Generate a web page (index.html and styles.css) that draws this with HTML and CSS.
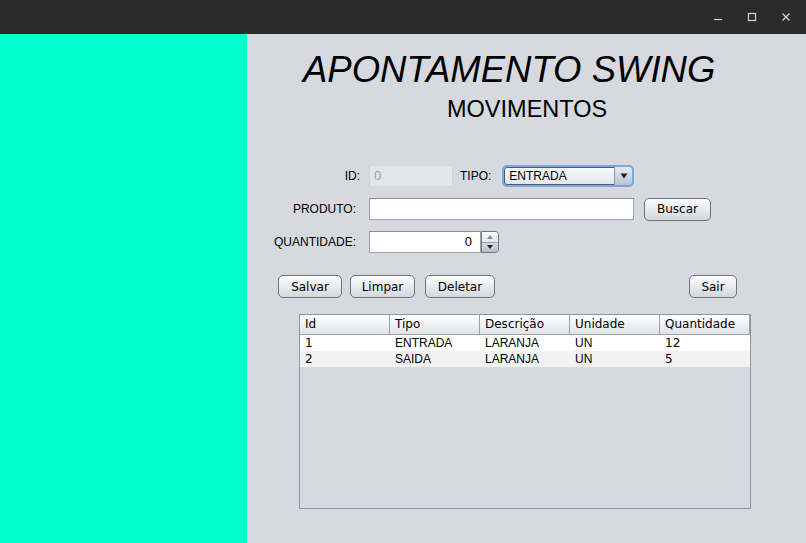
FILE: index.html
```html
<!DOCTYPE html>
<html>
<head>
<meta charset="utf-8">
<link rel="stylesheet" href="styles.css">
</head>
<body>
<div class="titlebar">
  <div class="winbtn">
    <svg width="10" height="10" viewBox="0 0 10 10"><path d="M1 7.5h8" stroke="#d4d4d4" stroke-width="1.2"/></svg>
  </div>
  <div class="winbtn">
    <svg width="10" height="10" viewBox="0 0 10 10"><rect x="1.5" y="1.5" width="7" height="7" fill="none" stroke="#d4d4d4" stroke-width="1.2"/></svg>
  </div>
  <div class="winbtn">
    <svg width="10" height="10" viewBox="0 0 10 10"><path d="M1.5 1.5l7 7M8.5 1.5l-7 7" stroke="#d4d4d4" stroke-width="1.3"/></svg>
  </div>
</div>
<div class="main">
  <div class="side"></div>
  <div class="panel">
    <h1 class="title">APONTAMENTO SWING</h1>
    <h2 class="subtitle">MOVIMENTOS</h2>
    <div class="form">
      <div class="row row-id">
        <label class="lbl lbl-id">ID:</label>
        <div class="field field-id">0</div>
        <label class="lbl lbl-tipo">TIPO:</label>
        <div class="combo">
          <span class="combo-text">ENTRADA</span>
          <span class="combo-arrow"><svg width="8" height="6" viewBox="0 0 8 6"><path d="M0.5 0.5h7L4 5.5z" fill="#222"/></svg></span>
        </div>
      </div>
      <div class="row">
        <label class="lbl">PRODUTO:</label>
        <div class="field field-prod"></div>
        <button class="btn btn-buscar">Buscar</button>
      </div>
      <div class="row">
        <label class="lbl">QUANTIDADE:</label>
        <div class="spinner">
          <div class="spin-field">0</div>
          <div class="spin-btns">
            <span class="spin-up"><svg width="6" height="4" viewBox="0 0 6 4"><path d="M0 4h6L3 0z" fill="#8a8f96"/></svg></span>
            <span class="spin-down"><svg width="6" height="4" viewBox="0 0 6 4"><path d="M0 0h6L3 4z" fill="#222"/></svg></span>
          </div>
        </div>
      </div>
    </div>
    <div class="actions">
      <button class="btn btn-salvar">Salvar</button>
      <button class="btn btn-limpar">Limpar</button>
      <button class="btn btn-deletar">Deletar</button>
      <button class="btn btn-sair">Sair</button>
    </div>
    <div class="table">
      <div class="thead">
        <div class="th">Id</div>
        <div class="th">Tipo</div>
        <div class="th">Descrição</div>
        <div class="th">Unidade</div>
        <div class="th">Quantidade</div>
      </div>
      <div class="tr odd">
        <div class="td num">1</div>
        <div class="td">ENTRADA</div>
        <div class="td">LARANJA</div>
        <div class="td">UN</div>
        <div class="td num">12</div>
      </div>
      <div class="tr even">
        <div class="td num">2</div>
        <div class="td">SAIDA</div>
        <div class="td">LARANJA</div>
        <div class="td">UN</div>
        <div class="td num">5</div>
      </div>
    </div>
  </div>
</div>
</body>
</html>
```

FILE: styles.css
```css
* { box-sizing: border-box; }
html, body { margin: 0; padding: 0; }
body {
  width: 806px;
  height: 543px;
  overflow: hidden;
  font-family: "Liberation Sans", Arial, sans-serif;
  font-size: 12px;
  color: #000;
  background: #d6d9df;
}
.titlebar {
  height: 34px;
  background: #2b2b2b;
  display: flex;
  justify-content: flex-end;
  align-items: center;
  padding-right: 3px;
}
.winbtn {
  width: 34px;
  height: 34px;
  display: flex;
  align-items: center;
  justify-content: center;
}
.main {
  display: flex;
  height: 509px;
}
.side {
  width: 247px;
  background: #00ffcc;
}
.panel {
  flex: 1;
  background: #d6d9df;
  padding-top: 16px;
}
.title {
  margin: 0 0 0 56px;
  font-family: "Liberation Sans", Arial, sans-serif;
  font-style: italic;
  font-weight: normal;
  font-size: 36.5px;
  line-height: 40px;
  white-space: nowrap;
}
.subtitle {
  margin: 5px 0 0 200px;
  font-family: "Liberation Sans", Arial, sans-serif;
  font-weight: normal;
  font-size: 23.5px;
  line-height: 28px;
}
.form {
  margin-top: 42px;
  padding-left: 19px;
  display: flex;
  flex-direction: column;
  gap: 11px;
}
.row {
  display: flex;
  align-items: center;
  height: 22px;
}
.lbl {
  width: 90px;
  text-align: right;
  font-size: 12px;
}
.lbl-id { width: 94px; margin-right: 9px; }
.row .lbl:not(.lbl-id):not(.lbl-tipo) { margin-right: 13px; }
.lbl-tipo { width: auto; margin-left: 7px; margin-right: 11px; }
.field {
  height: 22px;
  background: #fff;
  border: 1px solid #9ea3aa;
  border-top-color: #8a8f96;
  padding: 0 4px;
  line-height: 20px;
  font-size: 13px;
}
.field-id {
  width: 84px;
  background: #e3e5e9;
  border-color: #d0d3d8;
  color: #9a9da3;
}
.field-prod { width: 265px; }
.combo {
  width: 132px;
  height: 22px;
  border: 2px solid #7ca6d9;
  border-radius: 5px;
  background: linear-gradient(#fbfcfd, #dfe4ec);
  display: flex;
  align-items: center;
  box-shadow: inset 0 0 0 1px #4d5d74;
}
.combo-text {
  flex: 1;
  padding-left: 5px;
  font-size: 12px;
}
.combo-arrow {
  width: 18px;
  height: 18px;
  border-left: 1px solid #8b95a4;
  background: linear-gradient(#e6ebf2, #b9c4d3);
  display: flex;
  align-items: center;
  justify-content: center;
  border-radius: 0 3px 3px 0;
}
.btn {
  font-family: "DejaVu Sans", sans-serif;
  font-size: 12px;
  height: 23px;
  padding: 0;
  border: 1px solid #6f737a;
  border-radius: 5px;
  background: linear-gradient(#fdfdfd, #e6e8ec 55%, #d3d7dd);
  color: #000;
}
.btn-buscar { width: 67px; margin-left: 10px; }
.spinner {
  display: flex;
  width: 130px;
  height: 22px;
}
.spin-field {
  width: 112px;
  height: 22px;
  background: #fff;
  border: 1px solid #9ea3aa;
  border-top-color: #8a8f96;
  text-align: right;
  padding-right: 8px;
  line-height: 20px;
  font-size: 13px;
}
.spin-btns {
  width: 18px;
  display: flex;
  flex-direction: column;
  border: 1px solid #6f737a;
  border-radius: 0 4px 4px 0;
  overflow: hidden;
}
.spin-up, .spin-down {
  flex: 1;
  display: flex;
  align-items: center;
  justify-content: center;
}
.spin-up { background: linear-gradient(#fbfbfc, #e4e7ec); border-bottom: 1px solid #9aa0a8; }
.spin-down { background: linear-gradient(#d5dbe3, #b4bfcd); }
.actions {
  display: flex;
  margin-top: 22px;
  padding-left: 31px;
  padding-right: 69px;
}
.btn-salvar { width: 64px; }
.btn-limpar { width: 65px; margin-left: 8px; }
.btn-deletar { width: 70px; margin-left: 10px; }
.btn-sair { width: 48px; margin-left: auto; }
.table {
  margin-top: 16px;
  margin-left: 52px;
  width: 452px;
  height: 195px;
  border: 1px solid #8f949c;
  background: #d6d9df;
}
.thead {
  display: flex;
  height: 20px;
  background: linear-gradient(#ffffff, #f1f2f4 50%, #e0e3e7);
  border-bottom: 1px solid #9ea2a9;
}
.th {
  width: 90px;
  font-family: "DejaVu Sans", sans-serif;
  font-size: 12px;
  line-height: 19px;
  padding-left: 5px;
  border-right: 1px solid #9ea2a9;
}
.tr {
  display: flex;
  height: 16px;
  line-height: 16px;
}
.tr.odd { background: #fff; }
.tr.even { background: #f2f2f2; }
.td {
  width: 90px;
  padding-left: 5px;
  font-size: 12px;
}
.td.num { font-family: "DejaVu Sans", sans-serif; }
```
